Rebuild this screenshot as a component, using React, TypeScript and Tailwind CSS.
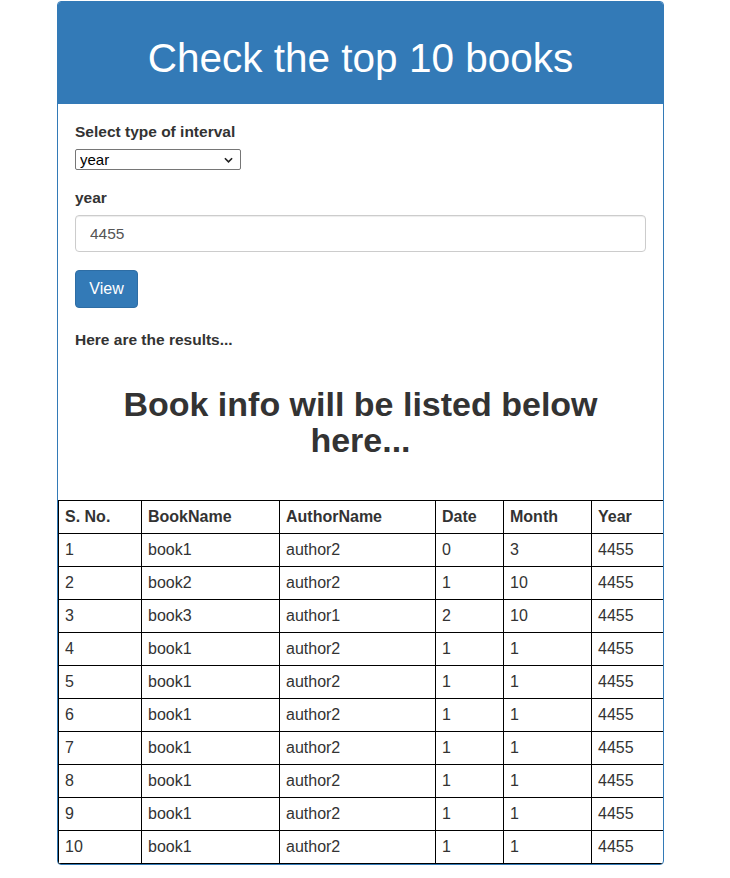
const rows = [
    { id: 1, book: "book1", author: "author2", date: "0", month: "3", year: "4455" },
    { id: 2, book: "book2", author: "author2", date: "1", month: "10", year: "4455" },
    { id: 3, book: "book3", author: "author1", date: "2", month: "10", year: "4455" },
    { id: 4, book: "book1", author: "author2", date: "1", month: "1", year: "4455" },
    { id: 5, book: "book1", author: "author2", date: "1", month: "1", year: "4455" },
    { id: 6, book: "book1", author: "author2", date: "1", month: "1", year: "4455" },
    { id: 7, book: "book1", author: "author2", date: "1", month: "1", year: "4455" },
    { id: 8, book: "book1", author: "author2", date: "1", month: "1", year: "4455" },
    { id: 9, book: "book1", author: "author2", date: "1", month: "1", year: "4455" },
    { id: 10, book: "book1", author: "author2", date: "1", month: "1", year: "4455" },
];

const headers = ["S. No.", "BookName", "AuthorName", "Date", "Month", "Year"];

export default function App() {
    return (
        <div className="min-h-[878px] bg-white pt-[1px] font-['Liberation_Sans',Arial,sans-serif] text-[#333]">
            <div className="ml-[57px] w-[607px] overflow-hidden rounded-[4px] border border-[#337ab7]">
                <div className="h-[102px] bg-[#337ab7] pt-[36px] text-center text-[40.5px] leading-[40px] text-white">
                    Check the top 10 books
                </div>

                <div className="px-[17px] pt-[18px]">
                    <label className="block text-[15.5px] font-bold leading-[20px]">
                        Select type of interval
                    </label>
                    <div className="relative mt-[7px] w-[166px]">
                        <select
                            defaultValue="year"
                            className="block h-[21px] w-full appearance-none rounded-[2px] border border-[#767676] bg-white pl-[4px] text-[15px] leading-[19px] text-black"
                        >
                            <option value="year">year</option>
                            <option value="month">month</option>
                            <option value="date">date</option>
                        </select>
                        <svg
                            viewBox="0 0 10 6"
                            className="pointer-events-none absolute right-[8px] top-[8px] h-[6px] w-[9px]"
                        >
                            <path d="M1 1l4 4 4-4" fill="none" stroke="#222" strokeWidth="1.8" />
                        </svg>
                    </div>

                    <label className="mt-[18px] block text-[15.5px] font-bold leading-[20px]">
                        year
                    </label>
                    <input
                        defaultValue="4455"
                        className="mt-[7px] block h-[37px] w-[571px] rounded-[4px] border border-[#ccc] px-[14px] text-[15.5px] text-[#555] shadow-[inset_0_1px_1px_rgba(0,0,0,0.075)] outline-none"
                    />

                    <button className="mt-[18px] h-[38px] w-[63px] rounded-[4px] border border-[#2e6da4] bg-[#337ab7] text-[16px] text-white">
                        View
                    </button>

                    <p className="mt-[22px] text-[15.5px] font-bold leading-[20px]">
                        Here are the results...
                    </p>

                    <h2 className="mx-auto mt-[36px] w-[520px] text-center text-[34px] font-bold leading-[36px]">
                        Book info will be listed below here...
                    </h2>
                </div>

                <table className="mt-[42px] w-[605px] table-fixed border-collapse border border-black text-[16px] leading-[20px]">
                    <colgroup>
                        <col className="w-[83px]" />
                        <col className="w-[138px]" />
                        <col className="w-[156px]" />
                        <col className="w-[68px]" />
                        <col className="w-[88px]" />
                        <col className="w-[72px]" />
                    </colgroup>
                    <thead>
                        <tr>
                            {headers.map((h) => (
                                <th
                                    key={h}
                                    className="border border-black px-[6px] py-[6px] text-left font-bold"
                                >
                                    {h}
                                </th>
                            ))}
                        </tr>
                    </thead>
                    <tbody>
                        {rows.map((r) => (
                            <tr key={r.id}>
                                <td className="border border-black px-[6px] py-[6px]">{r.id}</td>
                                <td className="border border-black px-[6px] py-[6px]">{r.book}</td>
                                <td className="border border-black px-[6px] py-[6px]">{r.author}</td>
                                <td className="border border-black px-[6px] py-[6px]">{r.date}</td>
                                <td className="border border-black px-[6px] py-[6px]">{r.month}</td>
                                <td className="border border-black px-[6px] py-[6px]">{r.year}</td>
                            </tr>
                        ))}
                    </tbody>
                </table>
            </div>
        </div>
    );
}
